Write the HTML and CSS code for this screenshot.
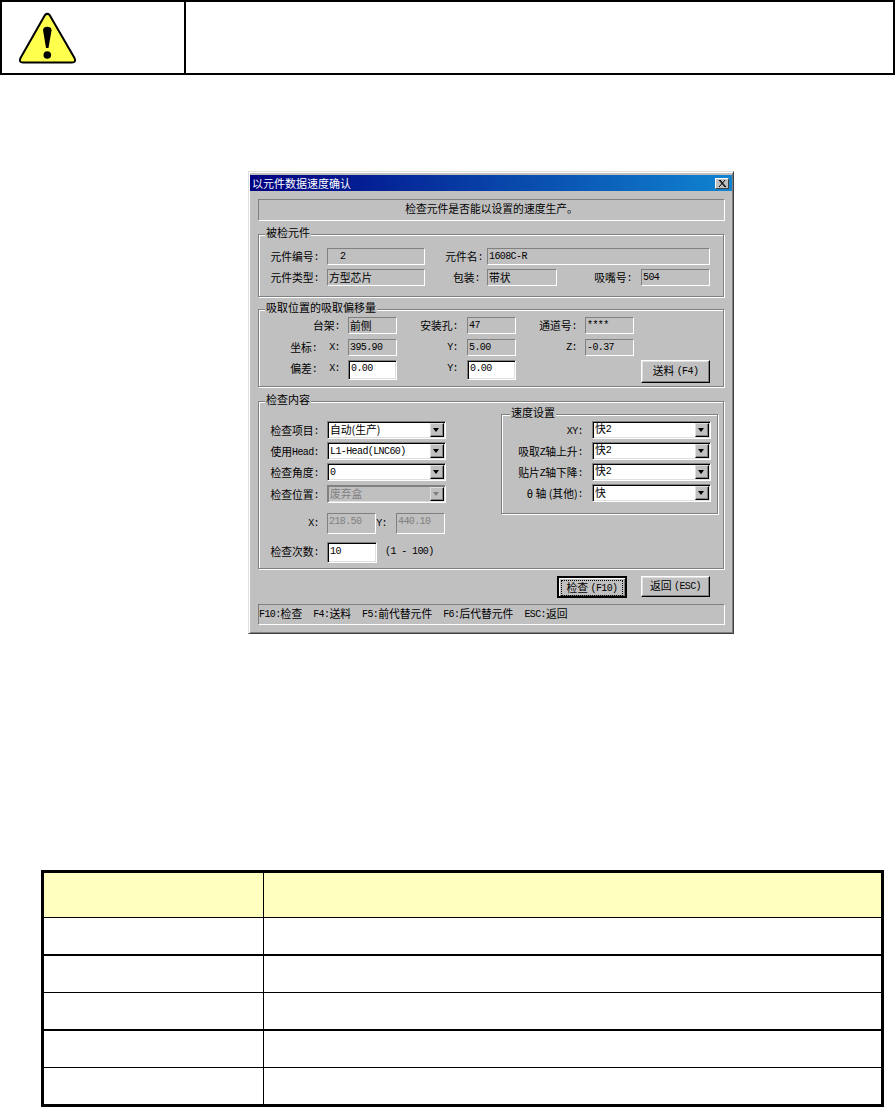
FILE: index.html
```html
<!DOCTYPE html>
<html lang="zh">
<head>
<meta charset="utf-8">
<title>以元件数据速度确认</title>
<link rel="stylesheet" href="styles.css">
</head>
<body>
<div class="warn">
  <div class="warn-icon">
    <svg width="58" height="52" viewBox="0 0 58 52">
      <path d="M26 3 Q28.300 0.800 30.600 3 L55.500 46 Q57.500 50.500 53 50.500 L4 50.500 Q-0.500 50.500 1.500 46 Z" fill="#ffff4d" stroke="#000" stroke-width="2" stroke-linejoin="round"/>
      <path d="M24 18 Q24.500 14.700 28.300 14.700 Q32 14.700 32.600 18 L29.500 36 L27 36 Z" fill="#000"/>
      <circle cx="28.300" cy="43" r="3.800" fill="#000"/>
    </svg>
  </div>
  <div class="warn-body"></div>
</div>

<div class="dialog">
  <div class="titlebar"><span>以元件数据速度确认</span><span class="close"><svg width="9" height="7" viewBox="0 0 9 7"><path d="M1 0 L7 7 M2 0 L8 7 M7 0 L1 7" stroke="#000" stroke-width="1" fill="none"/></svg></span></div>
  <div class="content">
    <div class="banner">检查元件是否能以设置的速度生产。</div>

    <fieldset class="group g1">
      <legend>被检元件</legend>
      <div class="row">
        <label class="l w1">元件编号<span class="m">:</span></label><div class="static w2 pad m">2</div>
        <label class="l w3">元件名<span class="m">:</span></label><div class="static w4 m">1608C-R</div>
      </div>
      <div class="row">
        <label class="l w1">元件类型<span class="m">:</span></label><div class="static w2">方型芯片</div>
        <label class="l w5">包装<span class="m">:</span></label><div class="static w6">带状</div>
        <label class="l w7">吸嘴号<span class="m">:</span></label><div class="static w8 m">504</div>
      </div>
    </fieldset>

    <fieldset class="group g2">
      <legend>吸取位置的吸取偏移量</legend>
      <div class="row r1">
        <label class="l a1">台架<span class="m">:</span></label><div class="static b">前侧</div>
        <label class="l a2">安装孔<span class="m">:</span></label><div class="static b m">47</div>
        <label class="l a3">通道号<span class="m">:</span></label><div class="static b m">****</div>
      </div>
      <div class="row r2">
        <label class="l a1 split"><span>坐标<span class="m">:</span></span><span class="m">X:</span></label><div class="static b m">395.90</div>
        <label class="l a2 m">Y:</label><div class="static b m">5.00</div>
        <label class="l a3 m">Z:</label><div class="static b m">-0.37</div>
      </div>
      <div class="row r3">
        <label class="l a1 split"><span>偏差<span class="m">:</span></span><span class="m">X:</span></label><div class="input b m">0.00</div>
        <label class="l a2 m">Y:</label><div class="input b m">0.00</div>
        <button class="btn feed">送料 <span class="m">(F4)</span></button>
      </div>
    </fieldset>

    <fieldset class="group g3">
      <legend>检查内容</legend>
      <div class="cols">
        <div class="left">
          <div class="crow"><label class="l c1">检查项目<span class="m">:</span></label><div class="combo"><span>自动(生产)</span><i class="arrow"></i></div></div>
          <div class="crow"><label class="l c1">使用<span class="m">Head:</span></label><div class="combo"><span class="m">L1-Head(LNC60)</span><i class="arrow"></i></div></div>
          <div class="crow"><label class="l c1">检查角度<span class="m">:</span></label><div class="combo"><span class="m">0</span><i class="arrow"></i></div></div>
          <div class="crow last"><label class="l c1">检查位置<span class="m">:</span></label><div class="combo off"><span>废弃盒</span><i class="arrow"></i></div></div>
          <div class="xyrow"><label class="l c1 m">X:</label><div class="static off xy m">218.50</div><label class="l c2 m">Y:</label><div class="static off xy m">440.10</div></div>
          <div class="countrow"><label class="l c1">检查次数<span class="m">:</span></label><div class="input count m">10</div><span class="hint m">(1 - 100)</span></div>
        </div>
        <fieldset class="group speed">
          <legend>速度设置</legend>
          <div class="crow"><label class="l s1 m">XY:</label><div class="combo"><span>快<span class="m">2</span></span><i class="arrow"></i></div></div>
          <div class="crow"><label class="l s1">吸取<span class="m">Z</span>轴上升<span class="m">:</span></label><div class="combo"><span>快<span class="m">2</span></span><i class="arrow"></i></div></div>
          <div class="crow"><label class="l s1">贴片<span class="m">Z</span>轴下降<span class="m">:</span></label><div class="combo"><span>快<span class="m">2</span></span><i class="arrow"></i></div></div>
          <div class="crow"><label class="l s1">θ 轴 (其他)<span class="m">:</span></label><div class="combo"><span>快</span><i class="arrow"></i></div></div>
        </fieldset>
      </div>
    </fieldset>

    <div class="actions">
      <button class="btn default"><span>检查 <span class="m">(F10)</span></span></button>
      <button class="btn back">返回 <span class="m">(ESC)</span></button>
    </div>
    <div class="status"><span><span class="m">F10:</span>检查</span><span><span class="m">F4:</span>送料</span><span><span class="m">F5:</span>前代替元件</span><span><span class="m">F6:</span>后代替元件</span><span><span class="m">ESC:</span>返回</span></div>
  </div>
</div>

<table class="grid">
  <tr class="head"><td class="col1"></td><td></td></tr>
  <tr class="r1h thick"><td class="col1"></td><td></td></tr>
  <tr class="r2h"><td class="col1"></td><td></td></tr>
  <tr class="r1h thick"><td class="col1"></td><td></td></tr>
  <tr class="r2h"><td class="col1"></td><td></td></tr>
  <tr class="r3h"><td class="col1"></td><td></td></tr>
</table>
</body>
</html>
```
FILE: styles.css
```css
* { box-sizing: border-box; }
html, body { margin: 0; padding: 0; background: #fff; }
body { width: 895px; height: 1107px; overflow: hidden; font-family: "Noto Sans CJK SC", "Liberation Sans", sans-serif; }

.m { font-family: "Liberation Mono", monospace; font-size: 10px; letter-spacing: -0.600px; }
span.m { vertical-align: 1px; }

.warn { display: flex; width: 895px; height: 75px; border: 2px solid #000; }
.warn-icon { width: 184px; border-right: 2px solid #000; padding: 10px 0 0 17px; }
.warn-icon svg { display: block; overflow: visible; }
.warn-body { flex: 1; }

.dialog { width: 486px; height: 463px; margin: 96px 0 0 248px; background: #c0c0c0; border: 1px solid #404040; border-top-color: #dfdfdf; border-left-color: #dfdfdf; box-shadow: inset 1px 1px 0 #fff, inset -1px -1px 0 #808080; padding: 3px 1px 0 1px; font-size: 10.800px; line-height: 12px; color: #000; }
.titlebar { height: 16px; display: flex; justify-content: space-between; align-items: center; padding: 0 3px 0 2px; color: #fff; background: linear-gradient(90deg, #000080, #1084d0); font-size: 11px; }
.close { display: flex; align-items: center; justify-content: center; width: 14px; height: 11px; background: #c0c0c0; border: 1px solid; border-color: #fff #404040 #404040 #fff; }
.content { padding: 8px 7px 0 8px; }

.banner { height: 22px; margin-bottom: 7px; text-align: center; line-height: 17px; border: 1px solid; border-color: #808080 #fff #fff #808080; }

.group { margin: 0 1px 0 0; padding: 0; min-width: 0; border: 1px solid #808080; box-shadow: 1px 1px 0 #fff, inset 1px 1px 0 #fff; }
.group legend { padding: 0 1px 4px; margin-left: 6px; font-size: 11px; line-height: 8px; background: linear-gradient(#c0c0c0, #c0c0c0) no-repeat; }
.g1 { height: 69px; padding-top: 8px; margin-bottom: 6px; }
.g2 { height: 84px; padding-top: 2px; margin-bottom: 8px; }
.g3 { height: 174px; }

.row { display: flex; align-items: flex-start; }
.g1 .row + .row { margin-top: 4px; }
.g2 .r2 { margin-top: 5px; }
.g2 .r3 { margin-top: 3px; }

.l { text-align: right; white-space: nowrap; line-height: 16px; height: 16px; color: #000; }
.l.m, .split > .m { line-height: 18px; height: 18px; }
.w1 { width: 60px; margin-right: 8px; }
.w3 { width: 58px; margin-right: 4px; }
.w5 { width: 55px; margin-right: 7px; }
.w7 { width: 75px; margin-right: 9px; }
.a1 { width: 81px; margin-right: 8px; }
.a2 { width: 61px; margin-right: 9px; }
.a3 { width: 61px; margin-right: 8px; }
.split { display: flex; justify-content: flex-end; gap: 12px; }

.static { height: 17px; line-height: 14px; padding-left: 1px; white-space: nowrap; overflow: hidden; border: 1px solid; border-color: #808080 #fff #fff #808080; }
.static.m { line-height: 16px; }
.pad { padding-left: 12px; }
.w2 { width: 98px; }
.w4 { width: 223px; }
.w6 { width: 70px; }
.w8 { width: 69px; }
.b { width: 49px; }

.input { height: 20px; background: #fff; border: 1px solid; border-color: #808080 #fff #fff #808080; box-shadow: inset 1px 1px 0 #000, inset -1px -1px 0 #dfdfdf; padding: 0 2px; line-height: 15px; }

.btn { font: inherit; color: #000; background: #c0c0c0; border: 1px solid; border-color: #fff #000 #000 #fff; box-shadow: inset -1px -1px 0 #808080, inset 1px 1px 0 #dfdfdf; padding: 0 0 2px; cursor: default; }
.feed { width: 69px; height: 23px; margin-left: 125px; }

.cols { display: flex; }
.left { width: 242px; padding-top: 14px; }
.crow { display: flex; align-items: flex-start; height: 21px; }
.crow.last { margin-top: 1px; height: 18px; }
.crow .l, .countrow .l { line-height: 18px; height: 18px; }
.crow .l.m { line-height: 21px; height: 21px; }
.xyrow .l { line-height: 22px; height: 22px; }
.c1 { width: 60px; margin-right: 8px; }
.c2 { width: 11px; margin: 0 9px 0 0; }
.combo { position: relative; display: flex; align-items: center; width: 119px; height: 18px; background: #fff; border: 1px solid; border-color: #808080 #fff #fff #808080; box-shadow: inset 1px 1px 0 #000, inset -1px -1px 0 #dfdfdf; padding: 0 0 2px 2px; line-height: 14px; }
.combo > .m { padding-top: 3px; }
.combo.off { background: #c0c0c0; color: #808080; box-shadow: inset 1px 1px 0 #808080, inset -1px -1px 0 #dfdfdf; }
.arrow { position: absolute; right: 1px; top: 1px; width: 14px; height: 14px; background: #c0c0c0; border: 1px solid; border-color: #dfdfdf #000 #000 #dfdfdf; box-shadow: inset -1px -1px 0 #808080; }
.arrow::after { content: ""; position: absolute; left: 2px; top: 4px; border: 3.500px solid transparent; border-top: 4px solid #000; border-bottom: 0; }
.off .arrow::after { border-top-color: #808080; }
.xyrow { display: flex; align-items: flex-start; margin-top: 10px; }
.xy { width: 49px; height: 21px; color: #808080; }
.countrow { display: flex; align-items: flex-start; margin-top: 7px; }
.count { width: 50px; height: 21px; padding-top: 1px; }
.hint { margin-left: 8px; line-height: 20px; }

.speed { width: 217px; height: 106px; margin: 1px 0 0 0; padding-top: 1px; }
.speed legend { margin-left: 8px; }
.s1 { width: 81px; margin-right: 9px; }

.actions { display: flex; justify-content: flex-end; align-items: flex-start; gap: 14px; padding: 7px 15px 0 0; height: 35px; }
.default { width: 70px; height: 22px; border: 2px solid #000; box-shadow: inset 1px 1px 0 #fff, inset -1px -1px 0 #808080; padding: 2px; }
.default > span { display: block; line-height: 12px; border: 1px dotted #000; }
.back { width: 69px; height: 21px; }
.status { display: flex; gap: 11px; height: 21px; border: 1px solid; border-color: #808080 #fff #fff #808080; line-height: 17px; white-space: nowrap; }

.grid { margin: 236px 0 0 41px; width: 843px; height: 237px; border-collapse: separate; border-spacing: 0; table-layout: fixed; border: 3px solid #000; }
.grid td { padding: 0; border-bottom: 1px solid #000; }
.grid .col1 { width: 220px; border-right: 1px solid #000; }
.head { height: 45px; }
.head td { background: #ffffc0; }
.r1h { height: 38px; }
.r2h { height: 37px; }
.r3h { height: 36px; }
.thick td { border-bottom-width: 2px; }
.r3h td { border-bottom: 0; }
```
